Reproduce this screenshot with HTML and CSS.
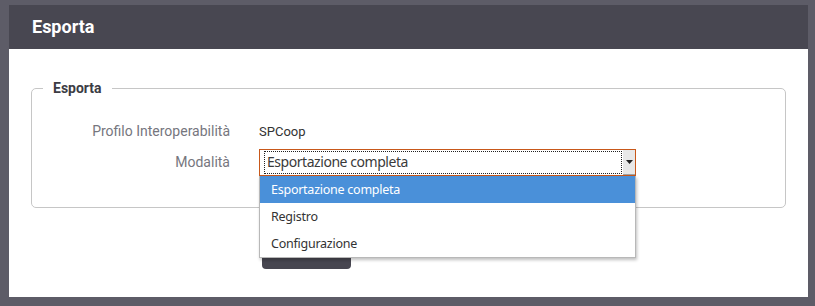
FILE: index.html
```html
<!DOCTYPE html>
<html lang="it">
<head>
<meta charset="utf-8">
<title>Esporta</title>
<link rel="stylesheet" href="styles.css">
</head>
<body>
<div class="panel">
  <div class="panel-header">Esporta</div>
  <div class="panel-body">
    <fieldset class="box">
      <legend class="box-legend">Esporta</legend>
      <div class="row row-text">
        <div class="label">Profilo Interoperabilità</div>
        <div class="value">SPCoop</div>
      </div>
      <div class="row row-select">
        <div class="label">Modalità</div>
        <div class="value">
          <div class="select">
            <div class="select-text"><span class="focus">Esportazione completa</span></div>
            <div class="select-arrow"><svg width="7" height="4" viewBox="0 0 7 4"><path d="M0 0h7L3.5 4z" fill="#222"/></svg></div>
            <ul class="dropdown">
              <li class="opt active">Esportazione completa</li>
              <li class="opt">Registro</li>
              <li class="opt">Configurazione</li>
            </ul>
          </div>
        </div>
      </div>
    </fieldset>
    <div class="actions">
      <button class="btn">Esporta</button>
    </div>
  </div>
</div>
</body>
</html>
```
FILE: styles.css
```css
html, body {
  margin: 0;
  padding: 0;
  background: #5d5c67;
  font-family: Roboto, "Liberation Sans", sans-serif;
}
.panel {
  margin: 5px 7px 0 9px;
  height: 292px;
  display: flex;
  flex-direction: column;
}
.panel-header {
  height: 44px;
  background: #484751;
  color: #fff;
  font-weight: 700;
  font-size: 18px;
  line-height: 44px;
  padding-left: 23px;
}
.panel-body {
  flex: 1;
  background: #fff;
  padding: 31px 22px 0 22px;
}
.box {
  margin: 0;
  border: 1px solid #c6c6c6;
  border-radius: 5px;
  padding: 21px 0 20px 0;
  height: 85px;
}
.box-legend {
  margin-left: 11px;
  padding: 0 10px;
  font-weight: 700;
  font-size: 14px;
  color: #3c3c44;
}
.row {
  display: flex;
  align-items: center;
}
.row-text {
  height: 28px;
}
.row-select {
  height: 28px;
  margin-top: 3px;
}
.label {
  width: 198px;
  text-align: right;
  color: #76767e;
  font-size: 14px;
}
.value {
  margin-left: 29px;
  font-size: 13px;
  color: #333;
  font-family: Roboto, "Liberation Sans", sans-serif;
}
.select {
  position: relative;
  width: 375px;
  height: 25px;
  border: 1px solid #c8581a;
  display: flex;
  background: #fff;
}
.select-text {
  flex: 1;
  padding: 2px 2px 2px 5px;
  display: flex;
}
.focus {
  flex: 1;
  outline: 1px dotted #222;
  outline-offset: 0;
  font-family: "Noto Sans", "DejaVu Sans", sans-serif;
  font-size: 14px;
  line-height: 19px;
  padding-left: 2px;
  color: #3a3a3a;
  letter-spacing: -0.45px;
}
.select-arrow {
  width: 12px;
  background: #e8e8e8;
  border-bottom: 1px solid #a0a0a0;
  display: flex;
  align-items: center;
  justify-content: center;
}
.dropdown {
  position: absolute;
  left: -1px;
  top: 26px;
  width: 375px;
  margin: 0;
  padding: 0;
  list-style: none;
  background: #fff;
  border: 1px solid #b8b8b8;
  border-top: none;
  box-shadow: 1px 2px 3px rgba(0,0,0,0.25);
  z-index: 2;
}
.opt {
  height: 27px;
  line-height: 27px;
  padding-left: 11px;
  font-family: "Noto Sans", "DejaVu Sans", sans-serif;
  font-size: 12.5px;
  color: #333;
  letter-spacing: -0.25px;
}
.opt.active {
  background: #4a90d9;
  color: #fff;
}
.actions {
  padding-left: 231px;
  margin-top: 31px;
}
.btn {
  width: 89px;
  height: 28px;
  border: none;
  border-radius: 4px;
  background: #474650;
  color: #fff;
  font-family: Roboto, sans-serif;
  font-size: 14px;
  line-height: 16px;
  padding: 0 0 12px 0;
}
```
